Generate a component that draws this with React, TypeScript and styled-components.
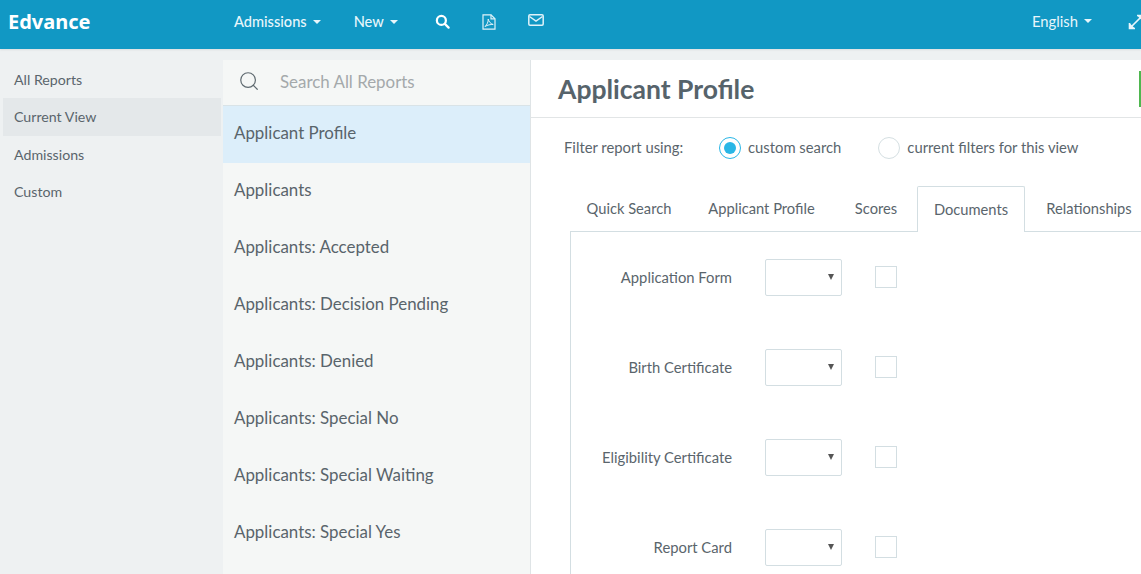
import React from 'react';
import styled, { createGlobalStyle } from 'styled-components';
import { Search } from 'lucide-react';

const GlobalStyle = createGlobalStyle`
  html, body {
    margin: 0;
    height: 574px;
    overflow: hidden;
    background: #eef1f2;
    font-family: 'Lato', 'Liberation Sans', sans-serif;
  }
  * { box-sizing: border-box; }
`;

const Page = styled.div`
  width: 1141px;
  height: 574px;
  overflow: hidden;
`;

const TopBar = styled.header`
  height: 49px;
  background: #1198c4;
  display: flex;
  align-items: center;
  color: #fff;
  box-shadow: 0 1px 2px rgba(0, 0, 0, 0.08);
`;

const Logo = styled.div`
  width: 234px;
  padding-left: 8px;
  font-family: 'Noto Sans', sans-serif;
  font-size: 20px;
  font-weight: 700;
  margin-top: -6px;
`;

const NavMenu = styled.div`
  display: flex;
  align-items: center;
  font-size: 14.6px;
  font-weight: 500;
  color: #e8f6fb;
  margin-top: -6px;
`;

const NavItem = styled.span<{ $gap: number }>`
  display: flex;
  align-items: center;
  margin-right: ${(p) => p.$gap}px;
`;

const Caret = styled.i`
  width: 0;
  height: 0;
  margin-left: 6px;
  border-left: 4px solid transparent;
  border-right: 4px solid transparent;
  border-top: 4px solid #e8f6fb;
`;

const NavIcon = styled.svg<{ $gap: number; $up?: number }>`
  display: block;
  margin-right: ${(p) => p.$gap}px;
  margin-top: ${(p) => -(p.$up ?? 0)}px;
`;

const RightMenu = styled.div`
  margin-left: auto;
  display: flex;
  align-items: center;
  font-size: 14.8px;
  color: #e8f6fb;
  margin-top: -8px;
  margin-right: -3px;
`;

const Body = styled.div`
  display: flex;
  height: 525px;
`;

const SideNav = styled.nav`
  width: 223px;
  padding: 11.5px 2px 0 3px;
  font-size: 14.2px;
  color: #5a656c;
`;

const SideItem = styled.div<{ $active?: boolean }>`
  height: 37.5px;
  padding-left: 11px;
  display: flex;
  align-items: center;
  background: ${(p) => (p.$active ? '#e4e8ea' : 'transparent')};
`;

const ReportColumn = styled.section`
  width: 308px;
  margin-top: 11px;
  background: #f5f7f6;
  border-right: 1px solid #dfe4e6;
`;

const SearchRow = styled.div`
  height: 46px;
  display: flex;
  align-items: center;
  padding: 0 0 3px 15px;
  color: #5f6a70;
  border-bottom: 1px solid #d9e3e7;
`;

const SearchText = styled.span`
  margin-left: 20px;
  font-size: 16.9px;
  color: #a4a9ab;
`;

const ReportItem = styled.div<{ $active?: boolean }>`
  height: 57px;
  padding: 0 0 5px 11px;
  display: flex;
  align-items: center;
  font-size: 16.9px;
  color: #59646b;
  background: ${(p) => (p.$active ? '#dceefa' : 'transparent')};
`;

const Main = styled.main`
  flex: 1;
  margin-top: 11px;
  background: #fff;
  min-width: 0;
`;

const TitleBar = styled.div`
  height: 58px;
  padding-left: 27px;
  display: flex;
  align-items: center;
  justify-content: space-between;
  border-bottom: 1px solid #e2e5e6;
`;

const Title = styled.h1`
  margin: 0;
  font-size: 26.5px;
  font-weight: 700;
  color: #56636b;
`;

const GreenEdge = styled.div`
  width: 2px;
  height: 36px;
  background: #4fb74f;
`;

const FilterRow = styled.div`
  display: flex;
  align-items: center;
  height: 59px;
  padding: 0 0 2px 33px;
  font-size: 14.8px;
  color: #5a656c;
`;

const FilterLabel = styled.span`
  width: 155px;
`;

const RadioOption = styled.label`
  display: flex;
  align-items: center;
  gap: 7px;
  margin-right: 37px;
`;

const Radio = styled.span<{ $on?: boolean }>`
  width: 22px;
  height: 22px;
  margin-top: 2px;
  border-radius: 50%;
  border: 1px solid ${(p) => (p.$on ? '#29b6e6' : '#d5dfe2')};
  display: flex;
  align-items: center;
  justify-content: center;
  &::after {
    content: '';
    width: 12px;
    height: 12px;
    border-radius: 50%;
    background: ${(p) => (p.$on ? '#29b6e6' : 'transparent')};
  }
`;

const TabStrip = styled.div`
  display: flex;
  height: 46px;
  margin: 9px 0 0 39px;
  font-size: 14.7px;
  color: #5a656c;
  border-bottom: 1px solid #d3dee2;
`;

const Tab = styled.div<{ $active?: boolean; $w: number }>`
  flex: none;
  width: ${(p) => p.$w}px;
  padding-bottom: 1px;
  display: flex;
  align-items: center;
  justify-content: center;
  white-space: nowrap;
  ${(p) =>
    p.$active &&
    `
    height: 46px;
    background: #fff;
    border: 1px solid #d3dee2;
    border-bottom: none;
    border-radius: 2px 2px 0 0;
  `}
`;

const Panel = styled.div`
  margin-left: 39px;
  height: 360px;
  border-left: 1px solid #d3dee2;
  padding-top: 26px;
`;

const FieldRow = styled.div`
  display: flex;
  align-items: center;
  height: 38px;
  margin-bottom: 52px;
  font-size: 14.8px;
  color: #5a656c;
`;

const FieldLabel = styled.span`
  width: 161px;
  text-align: right;
`;

const SelectBox = styled.div`
  position: relative;
  width: 77px;
  height: 37px;
  margin-left: 33px;
  border: 1px solid #d3dee2;
  border-radius: 2px;
  &::after {
    content: '';
    position: absolute;
    top: 14px;
    right: 7px;
    border-left: 3px solid transparent;
    border-right: 3px solid transparent;
    border-top: 6px solid #555;
  }
`;

const CheckBox = styled.span`
  width: 22px;
  height: 22px;
  margin-left: 33px;
  border: 1px solid #d3dee2;
`;

const reports = [
  'Applicant Profile',
  'Applicants',
  'Applicants: Accepted',
  'Applicants: Decision Pending',
  'Applicants: Denied',
  'Applicants: Special No',
  'Applicants: Special Waiting',
  'Applicants: Special Yes',
];

const fields = ['Application Form', 'Birth Certificate', 'Eligibility Certificate', 'Report Card'];

const tabs: [string, number][] = [
  ['Quick Search', 118],
  ['Applicant Profile', 147],
  ['Scores', 82],
  ['Documents', 108],
  ['Relationships', 128],
];

export default function App() {
  return (
    <Page>
      <GlobalStyle />
      <TopBar>
        <Logo>Edvance</Logo>
        <NavMenu>
          <NavItem $gap={33}>Admissions<Caret /></NavItem>
          <NavItem $gap={37}>New<Caret /></NavItem>
          <NavIcon $gap={32} width="15" height="15" viewBox="0 0 16 16" fill="none" stroke="#fff" strokeWidth="2.4" strokeLinecap="round">
            <circle cx="6.8" cy="6.8" r="4.8" />
            <path d="M10.5 10.5 14.5 14.5" />
          </NavIcon>
          <NavIcon $gap={32} width="14" height="16" viewBox="0 0 14 16" fill="none" stroke="#dff2f9" strokeWidth="1.2">
            <path d="M1 .8h8l4 4v10.4H1z" />
            <path d="M9 .8v4h4" />
            <path d="M3 12.500c2-1.500 3.500-5 3.200-7.500.6 2.500 2 4.500 5 5.500-2.700-.2-5.700.5-8.200 2z" strokeWidth="1" />
          </NavIcon>
          <NavIcon $gap={0} $up={3} width="16" height="13" viewBox="0 0 16 13" fill="none" stroke="#dff2f9" strokeWidth="1.5">
            <rect x=".8" y=".8" width="14.400" height="10.400" rx="1.200" />
            <path d="M1.500 2.500 8 7l6.500-4.500" />
          </NavIcon>
        </NavMenu>
        <RightMenu>
          <NavItem $gap={36}>English<Caret /></NavItem>
          <NavIcon $gap={0} $up={-2} width="16" height="16" viewBox="0 0 16 16" fill="none" stroke="#e8f6fb" strokeWidth="1.6">
            <path d="M2.500 13.500 13.500 2.500" />
            <path d="M9 1.500h5.500V7" fill="#e8f6fb" />
            <path d="M1.500 9v5.500H7" fill="#e8f6fb" />
          </NavIcon>
        </RightMenu>
      </TopBar>
      <Body>
        <SideNav>
          <SideItem>All Reports</SideItem>
          <SideItem $active>Current View</SideItem>
          <SideItem>Admissions</SideItem>
          <SideItem>Custom</SideItem>
        </SideNav>
        <ReportColumn>
          <SearchRow>
            <Search size={22} strokeWidth={1.3} />
            <SearchText>Search All Reports</SearchText>
          </SearchRow>
          {reports.map((r, i) => (
            <ReportItem key={r} $active={i === 0}>{r}</ReportItem>
          ))}
        </ReportColumn>
        <Main>
          <TitleBar>
            <Title>Applicant Profile</Title>
            <GreenEdge />
          </TitleBar>
          <FilterRow>
            <FilterLabel>Filter report using:</FilterLabel>
            <RadioOption><Radio $on />custom search</RadioOption>
            <RadioOption><Radio />current filters for this view</RadioOption>
          </FilterRow>
          <TabStrip>
            {tabs.map(([t, w]) => (
              <Tab key={t} $w={w} $active={t === 'Documents'}>{t}</Tab>
            ))}
          </TabStrip>
          <Panel>
            {fields.map((f) => (
              <FieldRow key={f}>
                <FieldLabel>{f}</FieldLabel>
                <SelectBox />
                <CheckBox />
              </FieldRow>
            ))}
          </Panel>
        </Main>
      </Body>
    </Page>
  );
}
